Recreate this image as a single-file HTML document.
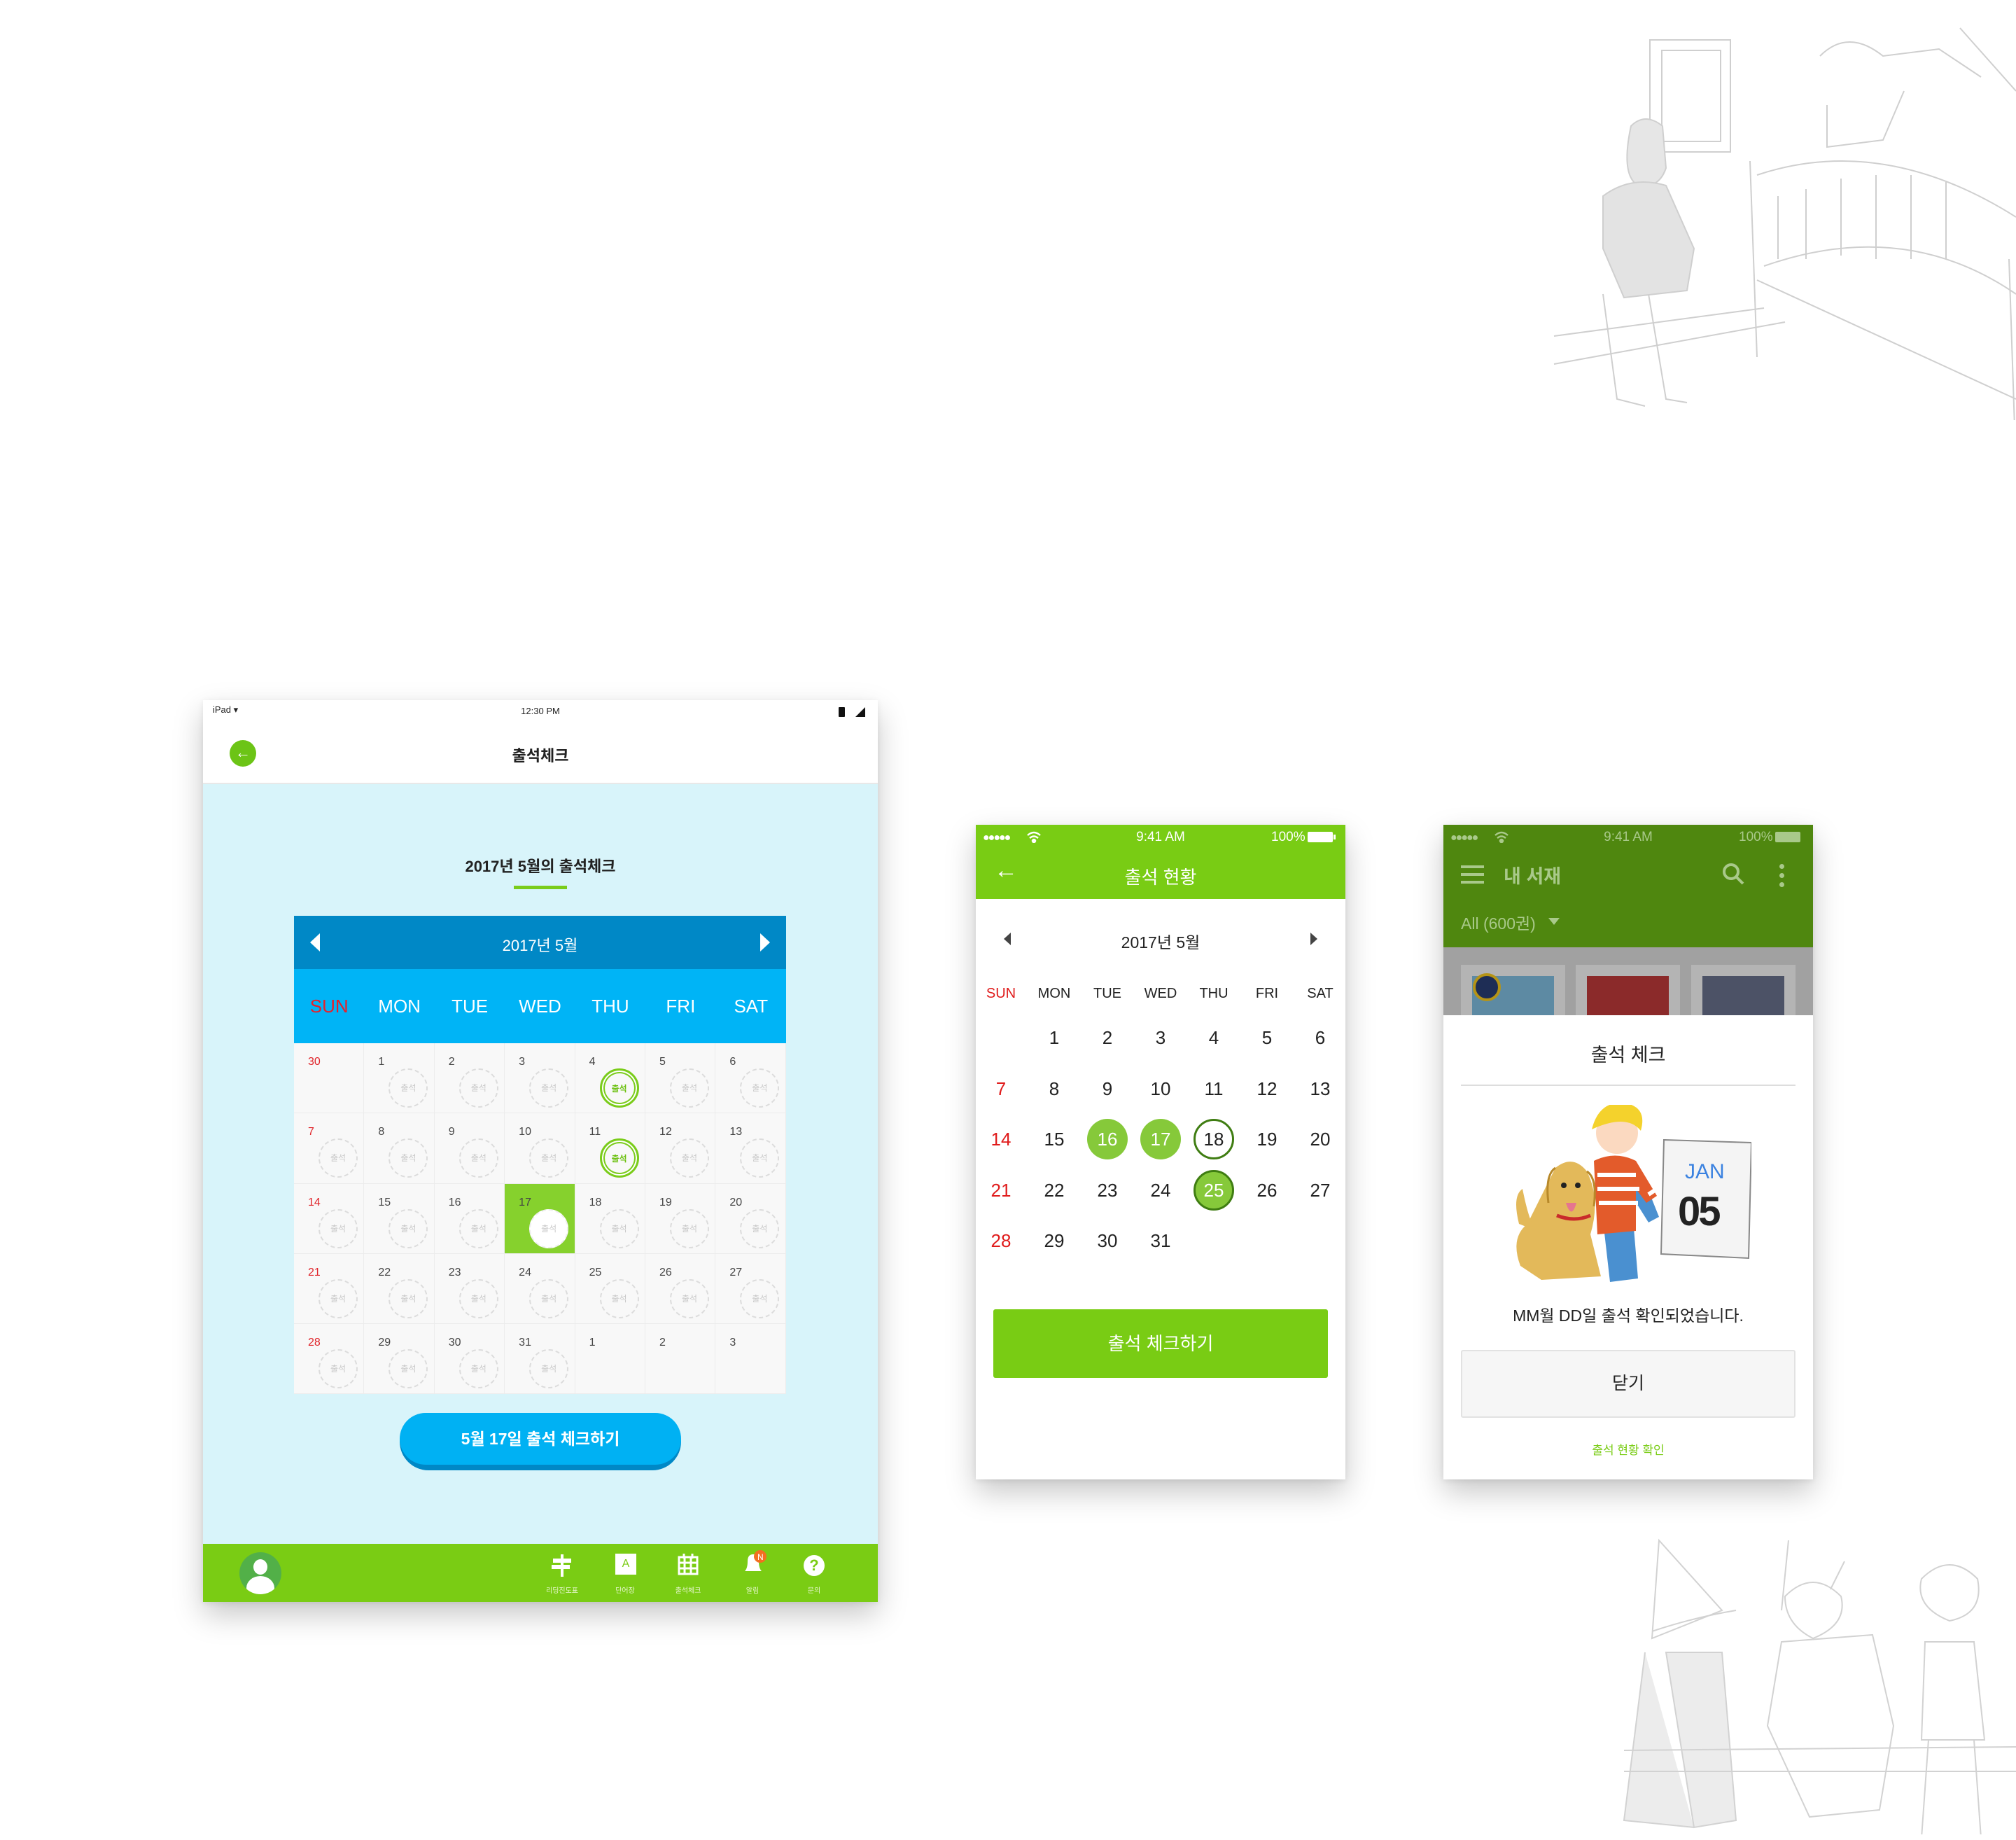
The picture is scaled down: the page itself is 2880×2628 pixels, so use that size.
<!DOCTYPE html><html><head><meta charset="utf-8"><style>
*{margin:0;padding:0;box-sizing:border-box}
body{width:2880px;height:2628px;background:#fff;position:relative;overflow:hidden;font-family:"Liberation Sans","Noto Sans CJK KR",sans-serif}
.a{position:absolute}
.grid{position:absolute;display:grid}
.ic{display:grid;grid-template-columns:repeat(7,100.4px);grid-auto-rows:100.3px;left:420px;top:1490px;background:#e9ebea;gap:0}
.ic div{position:relative;background:#f8f8f8;border-right:1.5px solid #ececec;border-bottom:1.5px solid #ececec}
.ic b{position:absolute;left:20px;top:18px;font-weight:normal;font-size:16px;color:#444}
.ic b.r{color:#e0242a}
.ic i{position:absolute;left:35px;top:36px;width:56px;height:56px;border-radius:50%;border:2px dashed #dcdcdc;font-style:normal;font-size:12px;color:#c9c9c9;text-align:center;line-height:52px}
.ic i.g{border:3px solid #7acc1a;color:#6cc010;font-weight:bold;box-shadow:inset 0 0 0 2px #fff,inset 0 0 0 4px #7acc1a}
.ic div.s{background:#86d12d}
.ic i.w{background:#fff;border:2px dashed #eee}
.pc{display:grid;grid-template-columns:repeat(7,76px);grid-auto-rows:72.6px;left:1392px;top:1446px}
.pc div{position:relative;font-size:26px;color:#222;text-align:center;line-height:72px}
.pc div.r{color:#e01b1b}
.pc span{display:inline-block;width:58px;height:58px;border-radius:50%;line-height:58px;margin-top:7px}
.sh{box-shadow:0 18px 40px rgba(0,0,0,.22),0 2px 8px rgba(0,0,0,.08)}
</style></head><body>

<!-- sketch top right -->
<svg class="a" style="left:2180px;top:0" width="700" height="600" fill="none" stroke="#cfcfcf" stroke-width="2">
<rect x="177" y="57" width="115" height="160"/><rect x="194" y="72" width="84" height="130"/>
<path d="M150 180 q20-20 45 0 l5 60 q-10 30-40 25 q-25-15-10-85z" fill="#e6e6e6"/>
<path d="M110 280 q40-30 90-15 l40 90 -10 60 -90 10 -30-70z" fill="#e3e3e3"/>
<path d="M110 420 l20 150 40 10 M175 420 l25 150 30 5"/>
<path d="M320 230 l10 280 M690 370 l10 300 M330 250 q180-60 370 60 M340 380 q200-70 360 40 M330 400 l370 170"/>
<path d="M360 280 l0 90 M400 270 l0 100 M450 255 l0 110 M500 250 l0 120 M550 250 l0 120 M600 260 l0 110"/>
<path d="M420 80 q40-40 90 0 l80-10 60 40 M430 150 l0 60 80-10 30-70"/>
<path d="M40 480 l300-40 M40 520 l330-60 M620 40 l80 90"/>
</svg>

<!-- sketch bottom right -->
<svg class="a" style="left:2300px;top:2170px" width="580" height="450" fill="none" stroke="#d2d2d2" stroke-width="2">
<path d="M70 30 l90 100 -100 40z M60 160 q60-20 120-30"/>
<path d="M50 190 l-30 240 100 10 M80 190 l40 250 60-10 l-20-240z" fill="#ececec"/>
<path d="M245 175 l130-10 30 130 -20 120 -100 10 -60-130z"/>
<path d="M250 110 q40-40 80 0 q10 40-40 60 q-40-20-40-60z M335 60 l-20 40"/>
<path d="M445 85 q40-40 80 0 q10 50-40 60 q-50-20-40-60z M450 175 l70 0 15 140 -90 0z M455 315 l-10 140 M520 315 l10 140"/>
<path d="M20 330 l560 -5 M20 360 l560 0"/>
<path d="M255 30 l-10 100"/>
</svg>

<!-- iPad -->
<div class="a sh" style="left:290px;top:1000px;width:964px;height:1288px;background:#d8f4fa">
 <div class="a" style="left:0;top:0;width:964px;height:120px;background:#fff;border-bottom:2px solid #e8e8e8"></div>
 <div class="a" style="left:14px;top:6px;font-size:13px;color:#222">iPad ▾</div>
 <div class="a" style="left:0;width:964px;top:8px;text-align:center;font-size:13px;color:#222">12:30 PM</div>
 <div class="a" style="left:908px;top:10px;width:9px;height:14px;background:#111;border-radius:1px"></div>
 <div class="a" style="left:932px;top:10px;width:0;height:0;border-left:14px solid transparent;border-bottom:14px solid #111"></div>
 <div class="a" style="left:38px;top:57px;width:38px;height:38px;border-radius:50%;background:#6cc416;color:#fff;font-size:22px;line-height:36px;text-align:center;font-weight:bold">&#8592;</div>
 <div class="a" style="left:0;width:964px;top:62px;text-align:center;font-size:22px;font-weight:bold;color:#222">출석체크</div>
 <div class="a" style="left:0;width:964px;top:220px;text-align:center;font-size:22px;font-weight:bold;color:#222">2017년 5월의 출석체크</div>
 <div class="a" style="left:444px;top:265px;width:76px;height:5px;background:#7acc1a"></div>
 <div class="a" style="left:130px;top:308px;width:703px;height:76px;background:#0088c6"></div>
 <div class="a" style="left:153px;top:333px;border-right:14px solid #fff;border-top:13px solid transparent;border-bottom:13px solid transparent"></div>
 <div class="a" style="left:796px;top:333px;border-left:14px solid #fff;border-top:13px solid transparent;border-bottom:13px solid transparent"></div>
 <div class="a" style="left:130px;width:703px;top:333px;text-align:center;font-size:22px;color:#fff">2017년 5월</div>
 <div class="a" style="left:130px;top:384px;width:703px;height:106px;background:#00b4f6;display:grid;grid-template-columns:repeat(7,1fr);font-size:26px;color:#fff;text-align:center;line-height:106px"><span style="color:#e8202a">SUN</span><span>MON</span><span>TUE</span><span>WED</span><span>THU</span><span>FRI</span><span>SAT</span></div>
 <div class="a" style="left:281px;top:2018px"></div>
 <div class="a" style="left:281px;top:1018px;width:402px;height:82px;border-radius:41px;background:#0088c6"></div>
 <div class="a" style="left:281px;top:1018px;width:402px;height:74px;border-radius:37px;background:#00b1f3;color:#fff;font-size:23px;font-weight:bold;text-align:center;line-height:74px">5월 17일 출석 체크하기</div>
 <div class="a" style="left:0;top:1205px;width:964px;height:83px;background:#7acc14"></div>
 <div class="a" style="left:52px;top:1217px;width:60px;height:60px;border-radius:50%;background:#52b048;overflow:hidden">
  <div class="a" style="left:20px;top:10px;width:20px;height:22px;border-radius:50%;background:#fff"></div>
  <div class="a" style="left:10px;top:34px;width:40px;height:34px;border-radius:50%;background:#fff"></div></div>
 <svg class="a" style="left:498px;top:1220px" width="30" height="32"><rect x="2" y="6" width="26" height="6" fill="#fff"/><rect x="0" y="15" width="26" height="6" fill="#fff"/><rect x="13" y="0" width="4" height="32" fill="#fff"/></svg>
 <div class="a" style="left:589px;top:1219px;width:30px;height:30px;background:#fff;color:#7acc14;font-size:16px;text-align:center;line-height:30px">A</div>
 <svg class="a" style="left:678px;top:1218px" width="30" height="32" fill="none" stroke="#fff" stroke-width="3"><rect x="2" y="6" width="26" height="24"/><path d="M2 14h26M2 22h26M10 6v24M19 6v24M9 1v7M21 1v7"/></svg>
 <svg class="a" style="left:768px;top:1214px" width="40" height="36"><path d="M6 30 q4-4 4-14 q0-10 8-10 q8 0 8 10 q0 10 4 14z" fill="#fff"/><circle cx="28" cy="9" r="9" fill="#f36f21"/><text x="24" y="14" font-size="12" fill="#fff" font-family="Liberation Sans">N</text></svg>
 <div class="a" style="left:858px;top:1221px;width:30px;height:30px;border-radius:50%;background:#fff;color:#7acc14;font-size:22px;font-weight:bold;text-align:center;line-height:30px">?</div>
 <div class="a" style="top:1263px;left:490px;width:46px;text-align:center;font-size:10px;color:#e8f7d0">리딩진도표</div>
 <div class="a" style="top:1263px;left:580px;width:46px;text-align:center;font-size:10px;color:#e8f7d0">단어장</div>
 <div class="a" style="top:1263px;left:670px;width:46px;text-align:center;font-size:10px;color:#e8f7d0">출석체크</div>
 <div class="a" style="top:1263px;left:762px;width:46px;text-align:center;font-size:10px;color:#e8f7d0">알림</div>
 <div class="a" style="top:1263px;left:850px;width:46px;text-align:center;font-size:10px;color:#e8f7d0">문의</div>
</div>
<div class="grid ic">
<div><b class="r">30</b></div><div><b>1</b><i>출석</i></div><div><b>2</b><i>출석</i></div><div><b>3</b><i>출석</i></div><div><b>4</b><i class="g">출석</i></div><div><b>5</b><i>출석</i></div><div><b>6</b><i>출석</i></div>
<div><b class="r">7</b><i>출석</i></div><div><b>8</b><i>출석</i></div><div><b>9</b><i>출석</i></div><div><b>10</b><i>출석</i></div><div><b>11</b><i class="g">출석</i></div><div><b>12</b><i>출석</i></div><div><b>13</b><i>출석</i></div>
<div><b class="r">14</b><i>출석</i></div><div><b>15</b><i>출석</i></div><div><b>16</b><i>출석</i></div><div class="s"><b>17</b><i class="w">출석</i></div><div><b>18</b><i>출석</i></div><div><b>19</b><i>출석</i></div><div><b>20</b><i>출석</i></div>
<div><b class="r">21</b><i>출석</i></div><div><b>22</b><i>출석</i></div><div><b>23</b><i>출석</i></div><div><b>24</b><i>출석</i></div><div><b>25</b><i>출석</i></div><div><b>26</b><i>출석</i></div><div><b>27</b><i>출석</i></div>
<div><b class="r">28</b><i>출석</i></div><div><b>29</b><i>출석</i></div><div><b>30</b><i>출석</i></div><div><b>31</b><i>출석</i></div><div><b>1</b></div><div><b>2</b></div><div><b>3</b></div>
</div>

<!-- Phone 1 -->
<div class="a sh" style="left:1394px;top:1178px;width:528px;height:935px;background:#fff">
 <div class="a" style="left:0;top:0;width:528px;height:106px;background:#79cc14"></div>
 <div class="a" style="left:10px;top:10px;font-size:16px;color:#fff;letter-spacing:-2px">●●●●● </div>
 <svg class="a" style="left:72px;top:8px" width="22" height="18" fill="none" stroke="#fff" stroke-width="2.5"><path d="M2 7q9-8 18 0M5 11q6-5 12 0"/><circle cx="11" cy="15" r="2" fill="#fff"/></svg>
 <div class="a" style="left:0;width:528px;top:7px;text-align:center;font-size:19px;color:#fff">9:41 AM</div>
 <div class="a" style="left:422px;top:7px;font-size:19px;color:#fff">100%</div>
 <div class="a" style="left:474px;top:10px;width:36px;height:15px;background:#fff;border-radius:2px"></div>
 <div class="a" style="left:511px;top:14px;width:3px;height:7px;background:#fff"></div>
 <div class="a" style="left:26px;top:48px;font-size:34px;color:#fff;line-height:34px">&#8592;</div>
 <div class="a" style="left:0;width:528px;top:55px;text-align:center;font-size:26px;color:#fff">출석 현황</div>
 <div class="a" style="left:40px;top:154px;border-right:10px solid #444;border-top:9px solid transparent;border-bottom:9px solid transparent"></div>
 <div class="a" style="left:478px;top:154px;border-left:10px solid #444;border-top:9px solid transparent;border-bottom:9px solid transparent"></div>
 <div class="a" style="left:0;width:528px;top:149px;text-align:center;font-size:23px;color:#222">2017년 5월</div>
 <div class="a" style="left:-2px;top:230px;width:532px;display:grid;grid-template-columns:repeat(7,76px);font-size:20px;color:#222;text-align:center"><span style="color:#e01b1b">SUN</span><span>MON</span><span>TUE</span><span>WED</span><span>THU</span><span>FRI</span><span>SAT</span></div>
 <div class="a" style="left:25px;top:692px;width:478px;height:98px;background:#79cc14;border-radius:3px;color:#fff;font-size:26px;text-align:center;line-height:98px">출석 체크하기</div>
</div>
<div class="grid pc">
<div></div><div>1</div><div>2</div><div>3</div><div>4</div><div>5</div><div>6</div>
<div class="r">7</div><div>8</div><div>9</div><div>10</div><div>11</div><div>12</div><div>13</div>
<div class="r">14</div><div>15</div><div><span style="background:#86c93a;color:#fff">16</span></div><div><span style="background:#86c93a;color:#fff">17</span></div><div><span style="border:3px solid #3f7d12;line-height:52px">18</span></div><div>19</div><div>20</div>
<div class="r">21</div><div>22</div><div>23</div><div>24</div><div><span style="background:#86c93a;color:#fff;border:3px solid #3f7d12;line-height:52px">25</span></div><div>26</div><div>27</div>
<div class="r">28</div><div>29</div><div>30</div><div>31</div>
</div>

<!-- Phone 2 -->
<div class="a sh" style="left:2062px;top:1178px;width:528px;height:935px;background:#fff;overflow:hidden">
 <div class="a" style="left:0;top:0;width:528px;height:175px;background:#4f870f"></div>
 <div class="a" style="left:10px;top:10px;font-size:16px;color:#a9c98a;letter-spacing:-2px">●●●●●</div>
 <svg class="a" style="left:72px;top:8px" width="22" height="18" fill="none" stroke="#a9c98a" stroke-width="2.5"><path d="M2 7q9-8 18 0M5 11q6-5 12 0"/><circle cx="11" cy="15" r="2" fill="#a9c98a"/></svg>
 <div class="a" style="left:0;width:528px;top:7px;text-align:center;font-size:19px;color:#a9c98a">9:41 AM</div>
 <div class="a" style="left:422px;top:7px;font-size:19px;color:#a9c98a">100%</div>
 <div class="a" style="left:474px;top:10px;width:36px;height:15px;background:#a9c98a;border-radius:2px"></div>
 <div class="a" style="left:25px;top:58px;width:33px;height:4px;background:#a9c98a;box-shadow:0 11px 0 #a9c98a,0 22px 0 #a9c98a"></div>
 <div class="a" style="left:86px;top:52px;font-size:27px;color:#a9c98a;font-weight:bold">내 서재</div>
 <svg class="a" style="left:398px;top:54px" width="34" height="34" fill="none" stroke="#a9c98a" stroke-width="4"><circle cx="13" cy="13" r="10"/><path d="M21 21l9 9"/></svg>
 <div class="a" style="left:480px;top:56px;width:7px;height:7px;border-radius:50%;background:#a9c98a;box-shadow:0 13px 0 #a9c98a,0 26px 0 #a9c98a"></div>
 <div class="a" style="left:25px;top:122px;font-size:23px;color:#a9c98a">All (600권)</div>
 <div class="a" style="left:150px;top:133px;border-top:10px solid #a9c98a;border-left:8px solid transparent;border-right:8px solid transparent"></div>
 <div class="a" style="left:0;top:175px;width:528px;height:97px;background:#a1a1a1"></div>
 <div class="a" style="left:25px;top:200px;width:149px;height:80px;background:#b4b4b4"></div>
 <div class="a" style="left:189px;top:200px;width:149px;height:80px;background:#b4b4b4"></div>
 <div class="a" style="left:354px;top:200px;width:149px;height:80px;background:#b4b4b4"></div>
 <div class="a" style="left:41px;top:216px;width:117px;height:56px;background:#5d8aa3"></div>
 <div class="a" style="left:205px;top:216px;width:117px;height:56px;background:#8b2a2a"></div>
 <div class="a" style="left:370px;top:216px;width:117px;height:56px;background:#4c5266"></div>
 <div class="a" style="left:42px;top:212px;width:40px;height:40px;border-radius:50%;background:#1e2d55;border:4px solid #b69416"></div>
 <div class="a" style="left:0;top:272px;width:528px;height:663px;background:#fff"></div>
 <div class="a" style="left:0;width:528px;top:307px;text-align:center;font-size:27px;color:#222">출석 체크</div>
 <div class="a" style="left:25px;top:371px;width:478px;height:2px;background:#ddd"></div>
 <svg class="a" style="left:100px;top:400px" width="340" height="270">
  <path d="M215 50 l125 4 -4 165 -125 -6z" fill="#f4f4f4" stroke="#888" stroke-width="2"/>
  <text x="245" y="105" font-size="30" fill="#3b82e0" font-family="Liberation Sans">JAN</text>
  <text x="235" y="172" font-size="58" font-weight="bold" fill="#222" font-family="Liberation Sans" letter-spacing="-3">05</text>
  <path d="M120 95 l60 -5 28 70 -15 8 -25-40 10 120 -40 5z" fill="#4a90d0"/>
  <path d="M115 80 q30-15 60 0 l30 50 -15 10 -15-20 0 60 -55 5z" fill="#e35b2b"/>
  <path d="M120 100h55M120 120h60M122 140h56M205 120l-12 8" stroke="#fff" stroke-width="6"/>
  <circle cx="148" cy="40" r="30" fill="#fbd9c0"/>
  <path d="M112 35 q10-40 45-38 q35 5 25 40 q-20-25-70-2z" fill="#f4d22c"/>
  <path d="M60 90 q25-20 45 5 q20 40 5 90 l15 60 -85 5 -30-20 q-15-40 10-60z" fill="#e3b95a"/>
  <path d="M60 90 q-15 10-10 50 M105 95 q15 10 10 50" stroke="#b8892a" stroke-width="3" fill="none"/>
  <path d="M8 170 q-10-40 5-50 q10 50 20 60z" fill="#e3b95a"/>
  <circle cx="72" cy="115" r="4" fill="#222"/><circle cx="92" cy="115" r="4" fill="#222"/>
  <path d="M75 140 q8 25 15 0z" fill="#e6758f"/>
  <path d="M62 158 q25 10 48 0" stroke="#c92b2b" stroke-width="5" fill="none"/>
 </svg>
 <div class="a" style="left:0;width:528px;top:682px;text-align:center;font-size:23px;color:#222">MM월 DD일 출석 확인되었습니다.</div>
 <div class="a" style="left:25px;top:750px;width:478px;height:97px;background:#f6f6f6;border:2px solid #e2e2e2;border-radius:3px;text-align:center;line-height:93px;font-size:25px;color:#222">닫기</div>
 <div class="a" style="left:0;width:528px;top:879px;text-align:center;font-size:17px;color:#79cc14">출석 현황 확인</div>
</div>
</body></html>
